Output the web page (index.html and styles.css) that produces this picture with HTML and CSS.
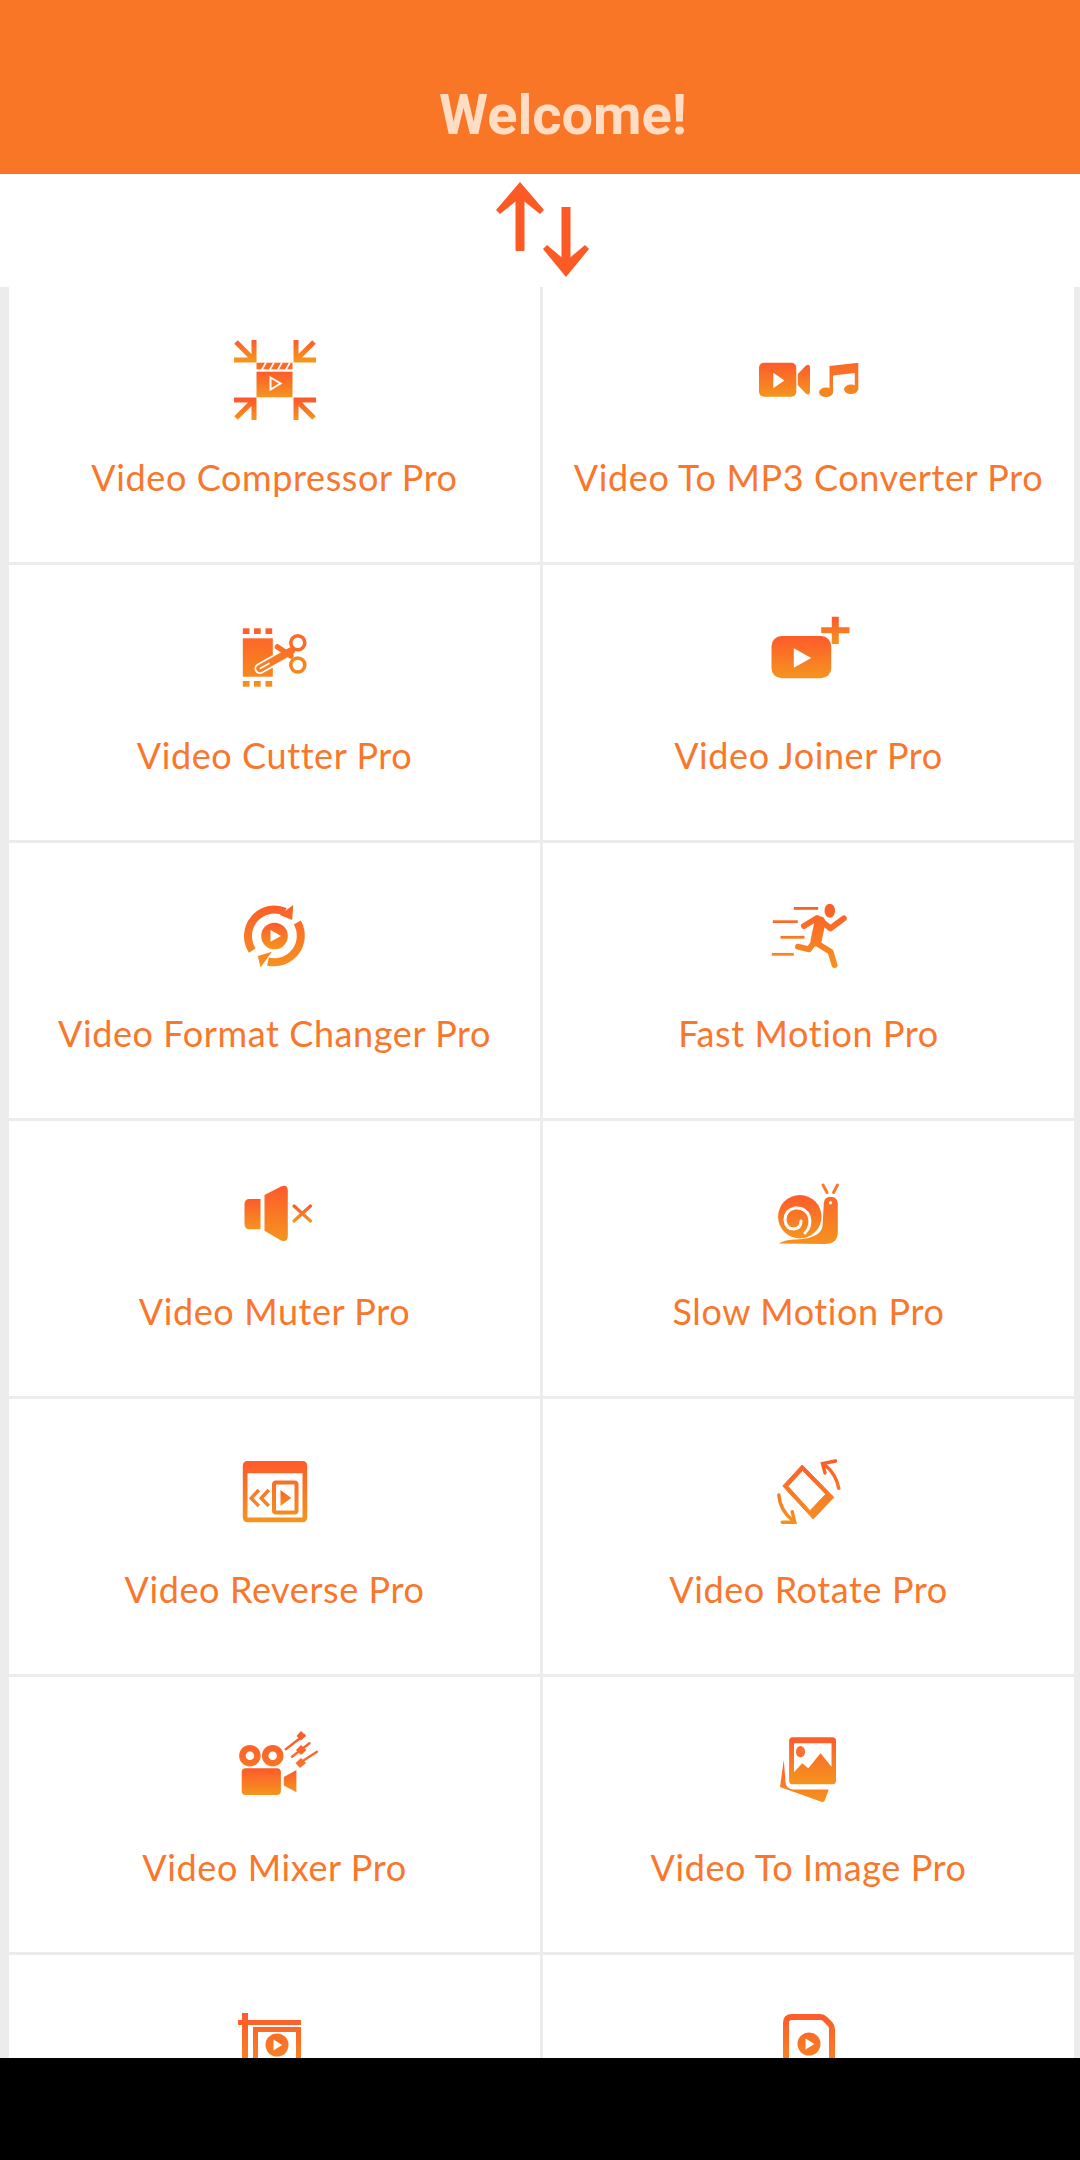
FILE: index.html
```html
<!DOCTYPE html>
<html lang="en">
<head>
    <meta charset="utf-8">
    <title>Welcome!</title>
    <link rel="stylesheet" href="styles.css">
</head>
<body>
<svg class="defs" aria-hidden="true">
    <defs>
        <linearGradient id="grad" x1="0" y1="0" x2="0" y2="1">
            <stop offset="0" stop-color="#fd5a2b"/>
            <stop offset="1" stop-color="#f5951e"/>
        </linearGradient>
        <linearGradient id="gradU" gradientUnits="userSpaceOnUse" x1="0" y1="15" x2="0" y2="85">
            <stop offset="0" stop-color="#fd5a2b"/>
            <stop offset="1" stop-color="#f5951e"/>
        </linearGradient>
    </defs>
</svg>
<div class="screen">
    <header class="topbar"><h1>Welcome!</h1></header>
    <div class="sort-row">
        <svg class="sort-icon" viewBox="0 0 120 113" fill="#fb5a24">
            <rect x="35.500" y="14" width="9" height="63" rx="1"/>
            <path d="M40 8L16 36L20 40L40 24L60 40L64 36Z"/>
            <rect x="81.500" y="33" width="9" height="60"/>
            <path d="M86 103L63 75L67 71L86 87L105 71L109 75Z"/>
        </svg>
    </div>
    <main class="tools">
        <!-- compress -->
        <a class="tool">
            <svg class="tool-icon" viewBox="0 0 100 100">
                <g fill="none" stroke="url(#grad)" stroke-width="5">
                    <path d="M11 12L27 28M9 30H29V10"/>
                    <path d="M89 12L73 28M91 30H71V10"/>
                    <path d="M11 88L27 72M9 70H29V90"/>
                    <path d="M89 88L73 72M91 70H71V90"/>
                </g>
                <rect x="31.500" y="32.700" width="36" height="6.600" fill="url(#gradU)"/>
                <path d="M37 39.500L41 32.500M45 39.500L49 32.500M53 39.500L57 32.500M61 39.500L65 32.500" stroke="#fff" stroke-width="1.600"/>
                <rect x="31.500" y="41.700" width="36" height="25.600" fill="url(#grad)"/>
                <path d="M45.500 47.500L55.500 53.500L45.500 59.500Z" fill="none" stroke="#fff" stroke-width="2"/>
            </svg>
            <span class="tool-name">Video Compressor Pro</span>
        </a>
        <!-- video to mp3 -->
        <a class="tool">
            <svg class="tool-icon" viewBox="0 0 100 100">
                <rect y="32.700" width="37.300" height="34" rx="5" fill="url(#grad)"/>
                <path d="M14.300 42.700L25.300 50.500L14.300 58.300Z" fill="#fff"/>
                <path d="M38.800 44L47 35.500Q51 33.500 51 37.500V62Q51 66 47 63.800L38.800 55Z" fill="url(#grad)"/>
                <path d="M70.500 36.100L99.300 32.700V60H95.800V43L74 45.600V62H70.500Z" fill="url(#gradU)"/>
                <ellipse cx="67" cy="62.300" rx="7" ry="4.800" fill="#f5861f"/>
                <ellipse cx="92" cy="59.300" rx="7" ry="4.800" fill="#f5861f"/>
            </svg>
            <span class="tool-name">Video To MP3 Converter Pro</span>
        </a>
        <!-- cutter -->
        <a class="tool">
            <svg class="tool-icon" viewBox="0 0 100 100">
                <g fill="url(#gradU)">
                    <rect x="17.800" y="20.300" width="6.700" height="5.700"/>
                    <rect x="29" y="20.300" width="6.700" height="5.700"/>
                    <rect x="40.500" y="20.300" width="6.700" height="5.700"/>
                    <rect x="17.800" y="30.300" width="30" height="38.400"/>
                    <rect x="17.800" y="73" width="6.700" height="5.700"/>
                    <rect x="29" y="73" width="6.700" height="5.700"/>
                    <rect x="40.500" y="73" width="6.700" height="5.700"/>
                </g>
                <g fill="none" stroke-linecap="round">
                    <path d="M35 60.500L66 43" stroke="#fff" stroke-width="11"/>
                    <path d="M35 60.500L66 43" stroke="url(#gradU)" stroke-width="7.500"/>
                    <path d="M35.500 60.300L44 55.500" stroke="#fff" stroke-width="1.800"/>
                    <path d="M52.500 39L66 48" stroke="url(#gradU)" stroke-width="5.500"/>
                    <circle cx="72.800" cy="34.700" r="7" stroke="#fb6a28" stroke-width="3.600"/>
                    <circle cx="72.800" cy="57" r="7" stroke="#f5861f" stroke-width="3.600"/>
                </g>
            </svg>
            <span class="tool-name">Video Cutter Pro</span>
        </a>
        <!-- joiner -->
        <a class="tool">
            <svg class="tool-icon" viewBox="0 0 100 100">
                <rect x="12.500" y="28" width="59.700" height="42.300" rx="10" fill="url(#grad)"/>
                <path d="M34.800 40.300L52.200 50L34.800 59.700Z" fill="#fff"/>
                <path d="M62.200 19.300H72.800V8.700H79.800V19.300H90.500V25.300H79.800V36H72.800V25.300H62.200Z" fill="url(#grad)"/>
            </svg>
            <span class="tool-name">Video Joiner Pro</span>
        </a>
        <!-- format changer -->
        <a class="tool">
            <svg class="tool-icon" viewBox="0 0 100 100">
                <g fill="none" stroke="url(#gradU)" stroke-width="8">
                    <path d="M27.300 64.500A26.500 26.500 0 0 1 60 25.700"/>
                    <path d="M72.300 36.600A26.500 26.500 0 0 1 43 75.500"/>
                </g>
                <path d="M68.200 19L67.200 34L54.800 29Z" fill="url(#gradU)"/>
                <path d="M32.800 70L35.500 81.500L47 65.700Z" fill="url(#gradU)"/>
                <circle cx="49.500" cy="50" r="13.300" fill="url(#grad)"/>
                <path d="M45.500 44L56 50L45.500 55.700Z" fill="#fff"/>
            </svg>
            <span class="tool-name">Video Format Changer Pro</span>
        </a>
        <!-- fast motion -->
        <a class="tool">
            <svg class="tool-icon" viewBox="0 0 100 100">
                <g fill="url(#gradU)">
                    <rect x="34.800" y="21" width="24.400" height="2.800"/>
                    <rect x="13.800" y="34.300" width="25" height="2.800"/>
                    <rect x="21.500" y="49.900" width="24" height="2.800"/>
                    <rect x="12.800" y="66.900" width="22" height="2.800"/>
                    <ellipse cx="70.800" cy="24.700" rx="5.300" ry="7"/>
                </g>
                <g fill="none" stroke="url(#gradU)" stroke-linecap="round" stroke-linejoin="round" stroke-width="6">
                    <path d="M45 40L58.200 32L71.500 42.300L84.800 32.300"/>
                    <path d="M61 36L57 55" stroke-width="11"/>
                    <path d="M56 55L50 63.300L39 60.700"/>
                    <path d="M59 58L71.500 65.700L75.500 79"/>
                </g>
            </svg>
            <span class="tool-name">Fast Motion Pro</span>
        </a>
        <!-- muter -->
        <a class="tool">
            <svg class="tool-icon" viewBox="0 0 100 100">
                <path d="M35.500 35V65.300H24.500Q19.500 65.300 19.500 60V40.500Q19.500 35 24.500 35Z" fill="url(#grad)"/>
                <path d="M39.500 31L56 22.500Q62.800 19.800 62.800 27V71.500Q62.800 78.800 56 76.500L39.500 66.700Z" fill="url(#grad)"/>
                <path d="M69 42L85.500 57M85.500 42L69 57" fill="none" stroke="url(#grad)" stroke-width="3.200" stroke-linecap="round"/>
            </svg>
            <span class="tool-name">Video Muter Pro</span>
        </a>
        <!-- slow motion -->
        <a class="tool">
            <svg class="tool-icon" viewBox="0 0 100 100">
                <circle cx="40.800" cy="52.700" r="21.700" fill="url(#grad)"/>
                <path d="M46 69Q53 62 50 52Q46 43 36 44Q26 46 26 56Q27 65 35 65Q42 64 42 57" fill="none" stroke="#fff" stroke-width="3" stroke-linecap="round"/>
                <path d="M20 79.500Q25 76 35 75.500C50 75 62 72 63.500 62L64.800 39.300Q65 32.700 71.500 32.700Q78.500 32.700 78.800 39.300V68Q78.800 80 66 80Z" fill="url(#gradU)"/>
                <circle cx="71.500" cy="38.800" r="1.700" fill="#fff"/>
                <path d="M64 21L68 28.500M78.500 21L74.500 28.500" fill="none" stroke="#f97a2a" stroke-width="3" stroke-linecap="round"/>
            </svg>
            <span class="tool-name">Slow Motion Pro</span>
        </a>
        <!-- reverse -->
        <a class="tool">
            <svg class="tool-icon" viewBox="0 0 100 100">
                <path d="M22.800 19H77.200Q82.200 19 82.200 24V75.300Q82.200 80.300 77.200 80.300H22.800Q17.800 80.300 17.800 75.300V24Q17.800 19 22.800 19ZM22.500 31.300V75.500H77.500V31.300Z" fill="url(#grad)" fill-rule="evenodd"/>
                <rect x="49" y="40.500" width="22.500" height="30" rx="2" fill="none" stroke="url(#gradU)" stroke-width="4"/>
                <path d="M55.500 48L66.200 56L55.500 64Z" fill="url(#grad)"/>
                <path d="M33.800 48L26.200 56.300L33.800 64M43.800 48L36.200 56.300L43.800 64" fill="none" stroke="url(#gradU)" stroke-width="3.400"/>
            </svg>
            <span class="tool-name">Video Reverse Pro</span>
        </a>
        <!-- rotate -->
        <a class="tool">
            <svg class="tool-icon" viewBox="0 0 100 100">
                <path d="M43.200 23L74.800 55.300L54.200 77L23.800 44ZM43.600 28.400L29 44.300L51 68.700L66.800 52.200Z" fill="url(#gradU)" fill-rule="evenodd" stroke="url(#gradU)" stroke-width="1" stroke-linejoin="round"/>
                <g fill="none" stroke="url(#gradU)" stroke-width="3.400" stroke-linecap="round">
                    <path d="M79.800 46.300Q77 32 66 23"/>
                    <path d="M76.500 19L63.500 21.500L66 31"/>
                    <path d="M19.800 53Q21 68 33.200 78"/>
                    <path d="M23.200 80.300H35.800L33.200 69.700"/>
                </g>
            </svg>
            <span class="tool-name">Video Rotate Pro</span>
        </a>
        <!-- mixer -->
        <a class="tool">
            <svg class="tool-icon" viewBox="0 0 100 100">
                <g fill="none" stroke="url(#gradU)" stroke-width="6.500">
                    <circle cx="24.900" cy="35.700" r="7.500"/>
                    <circle cx="47.700" cy="35.700" r="7.500"/>
                </g>
                <rect x="16.700" y="48.300" width="39.200" height="26.700" rx="4" fill="url(#grad)"/>
                <path d="M58.800 57L71.400 50V72.300L58.800 65.500Z" fill="url(#grad)"/>
                <path d="M60.800 29.300L79.200 15M67 36.700L84.500 23.300M73 44L92 31.700" fill="none" stroke="url(#gradU)" stroke-width="2.400" stroke-linecap="round"/>
                <g fill="url(#gradU)">
                    <path d="M76 11L81 16L76 20.500L71.500 16Z"/>
                    <path d="M76 25L81.500 30L76 35L71 30Z"/>
                    <path d="M76 38L81 43L75 48L70.500 43Z"/>
                </g>
            </svg>
            <span class="tool-name">Video Mixer Pro</span>
        </a>
        <!-- to image -->
        <a class="tool">
            <svg class="tool-icon" viewBox="0 0 100 100">
                <path d="M24.800 40L21 67L63 82Q65 82.500 66 80L69.700 69.500H34Q27 69 26.500 62Z" fill="url(#grad)"/>
                <rect x="30.100" y="17.300" width="46.900" height="47" rx="3.500" fill="url(#grad)"/>
                <path d="M35 23.300H72.500V46.700L61.500 33.300L49.300 48.300L43.200 43.300L35 52.300Z" fill="#fff"/>
                <ellipse cx="41.500" cy="31.700" rx="4.600" ry="5.600" fill="#f97030"/>
            </svg>
            <span class="tool-name">Video To Image Pro</span>
        </a>
        <!-- crop, only the top shows above the bar -->
        <a class="tool tool-cut">
            <svg class="tool-icon" viewBox="0 0 100 100">
                <path d="M17 22V15H23V22H76V27H23V60H17V27H13V22Z" fill="url(#gradU)"/>
                <path d="M28 29H76V70H28ZM33 34V66H71V34Z" fill="url(#gradU)" fill-rule="evenodd"/>
                <circle cx="52" cy="47" r="11.500" fill="url(#gradU)"/>
                <path d="M48.500 41.500L57 47L48.500 52.500Z" fill="#fff"/>
            </svg>
        </a>
        <!-- recorder -->
        <a class="tool tool-cut">
            <svg class="tool-icon" viewBox="0 0 100 100">
                <path d="M33 19H61Q64 19 66 21L71 26Q73 28 73 31V70H27V25Q27 19 33 19Z" fill="none" stroke="url(#gradU)" stroke-width="6"/>
                <circle cx="50" cy="46" r="11.500" fill="url(#gradU)"/>
                <path d="M46.500 40.500L55.500 46L46.500 51.500Z" fill="#fff"/>
            </svg>
        </a>
    </main>
    <div class="nav-bar"></div>
</div>
</body>
</html>
```

FILE: styles.css
```css
html, body { margin: 0; padding: 0; background: #fff; }

.defs { display: block; width: 0; height: 0; }

.screen {
    display: flex;
    flex-direction: column;
    height: 2160px;
    overflow: hidden;
}

.topbar {
    display: flex;
    justify-content: center;
    align-items: flex-end;
    flex: none;
    height: 174px;
    padding-left: 46px;
    box-sizing: border-box;
    background: #f97626;
}
.topbar h1 {
    margin: 0 0 29px;
    font: 700 56px/60px Roboto, "Liberation Sans", sans-serif;
    color: #ffdcc4;
}

.sort-row {
    display: flex;
    justify-content: center;
    flex: none;
    height: 113px;
}
.sort-icon { width: 120px; height: 113px; }

.tools {
    display: grid;
    grid-template-columns: 1fr 1fr;
    grid-auto-rows: 275px;
    gap: 3px;
    flex: 1;
    min-height: 0;
    overflow: hidden;
    padding: 0 6px 0 9px;
    background: #ececec;
}

.tool {
    display: flex;
    flex-direction: column;
    align-items: center;
    padding-top: 43px;
    box-sizing: border-box;
    background: #fff;
}
.tool-icon { display: block; flex: none; width: 100px; height: 100px; }
.tool-name {
    margin-top: 23px;
    font: 400 36px/48px Lato, "Open Sans", sans-serif;
    letter-spacing: .6px;
    color: #f9772c;
    white-space: nowrap;
}

.nav-bar { flex: none; height: 102px; background: #000; }
```
